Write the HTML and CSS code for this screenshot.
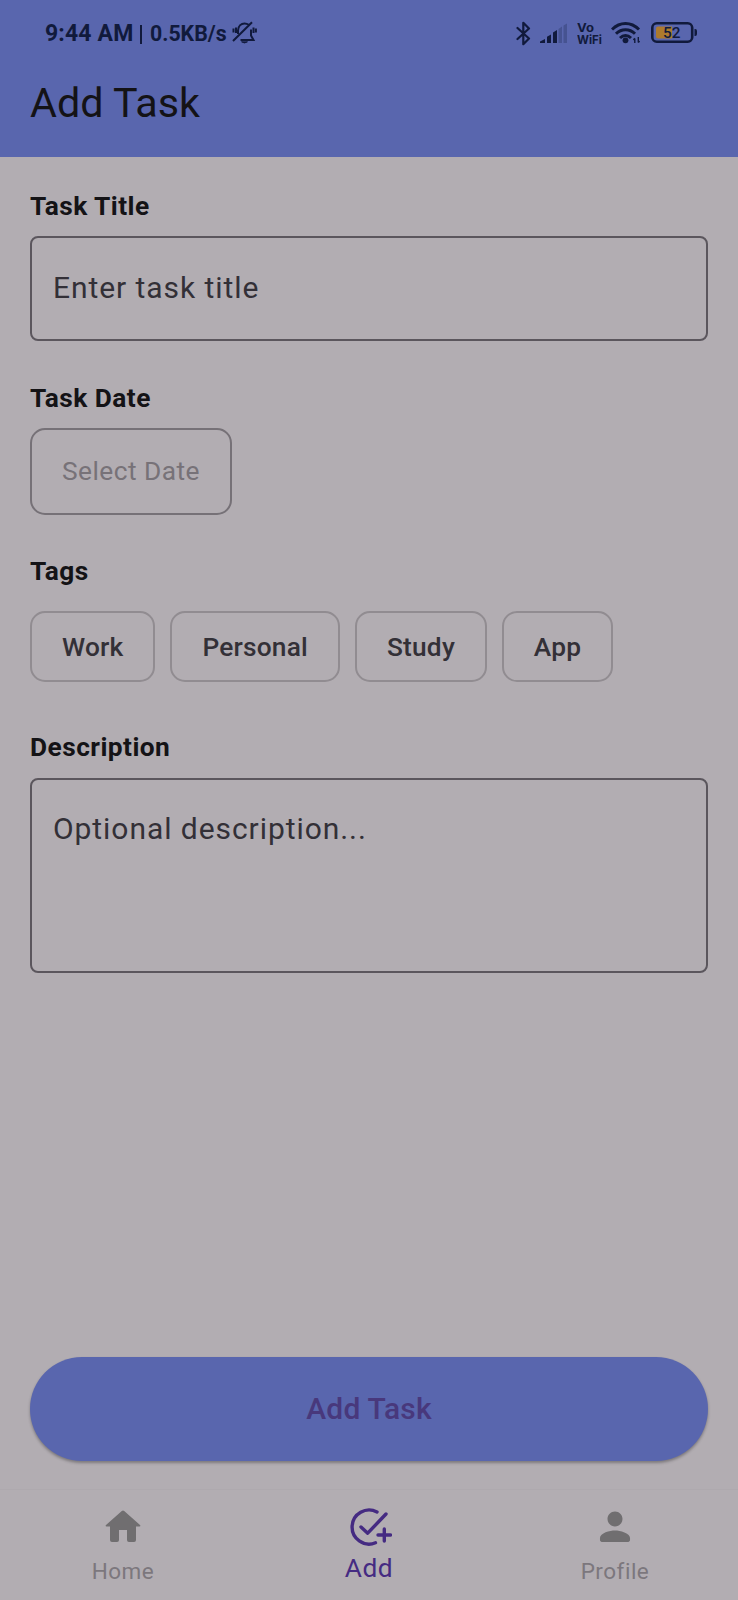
FILE: index.html
```html
<!DOCTYPE html>
<html lang="en">
<head>
<meta charset="utf-8">
<title>Add Task</title>
<link rel="stylesheet" href="styles.css">
</head>
<body>
<div class="screen">
  <header class="header">
    <div class="status">
      <span class="clock">9:44 AM</span>
      <span class="divider"></span>
      <span class="speed">0.5KB/s</span>
      <svg class="bell" width="25" height="24" viewBox="0 0 25 24" fill="none" stroke="currentColor" stroke-width="2">
        <path d="M6 13V9.500C6.300 5 9.300 2.500 12.500 2.500c1.600 0 3 .4 4.200 1.300M19 8.500V14.500l2.500 4.500H8.500M1 20 20 1.200M1.500 7.500v4M4 6.500v5.500M21.500 6.500v5.500M23.900 7.500v4"/>
        <path d="M9.500 20.800h6q-3 2.400-6 0z" fill="currentColor" stroke-width=".8"/>
      </svg>
      <div class="status-icons">
        <svg width="15" height="25" viewBox="0 0 15 25" fill="none" stroke="currentColor" stroke-width="2.200" stroke-linejoin="round" stroke-linecap="round"><path d="M1.500 7 13 17.500 7.300 23.200V1.800L13 7.500 1.500 18"/></svg>
        <svg class="signal" width="28" height="21" viewBox="0 0 28 21" fill="currentColor"><path d="M0 20v-1.500L5 16v4zM7 13.800 11 11.500V20H7zM13 9.500 17 7v13h-4z"/><path opacity=".25" d="M18.500 6 22 3.500V20h-3.500zM23.500 2.500 27 .5V20h-3.500z"/></svg>
        <svg class="vowifi" width="26" height="28" viewBox="0 -3 26 28" fill="currentColor"><text x="0" y="9.700" textLength="17" lengthAdjust="spacingAndGlyphs">Vo</text><text x="0" y="21.800" textLength="25" lengthAdjust="spacingAndGlyphs">WiFi</text></svg>
        <svg class="wifi" width="30" height="24" viewBox="0 0 30 24" fill="none" stroke="currentColor" stroke-width="3"><path d="M1 8.500C9 .5 20 .5 28 8.500M5 12.800c5.500-5.400 13.500-5.400 19 0M9 17c3.400-3.300 7.600-3.300 11 0"/><circle cx="14.500" cy="19.300" r="2.900" fill="currentColor" stroke="none"/><path stroke-width="1.400" d="M23.800 17.500v4.500M22.500 19l1.300-1.700M27.300 16v5.500M28.500 20l-1.200 1.700"/></svg>
        <svg class="battery" width="48" height="22" viewBox="0 0 48 22"><rect x="1.300" y="1.300" width="39.900" height="18.400" rx="4.500" fill="none" stroke="currentColor" stroke-width="2.600"/><path fill="#ad7a2d" d="M7 4.500h14v12H7q-2 0-2-2v-8q0-2 2-2z"/><path fill="currentColor" d="M43.500 7h.7q1.800 0 1.800 2v3q0 2-1.800 2h-.7z"/><text x="12" y="16.300" fill="currentColor" textLength="17.500" lengthAdjust="spacingAndGlyphs">52</text></svg>
      </div>
    </div>
    <h1 class="title">Add Task</h1>
  </header>

  <main class="form">
    <label class="label">Task Title</label>
    <div class="field">Enter task title</div>
    <label class="label label-date">Task Date</label>
    <button class="date">Select Date</button>
    <label class="label label-tags">Tags</label>
    <div class="tags">
      <span class="tag tag-work">Work</span>
      <span class="tag tag-personal">Personal</span>
      <span class="tag tag-study">Study</span>
      <span class="tag tag-app">App</span>
    </div>
    <label class="label label-description">Description</label>
    <div class="field field-area">Optional description...</div>
    <button class="submit">Add Task</button>
  </main>

  <nav class="nav">
    <a class="nav-item">
      <svg width="46" height="46" viewBox="0 0 46 46" fill="currentColor"><path d="M19 36V26h8v10q0 2 2 2h5q2 0 2-2V22.500h3.500q1.500-.2.500-1.500L24.200 7q-1.200-1-2.400 0L6 21q-1 1.300.5 1.500H10V36q0 2 2 2h5q2 0 2-2z"/></svg>
      <span>Home</span>
    </a>
    <a class="nav-item nav-active">
      <svg width="46" height="46" viewBox="0 0 46 46" fill="none" stroke="currentColor" stroke-width="3.400" stroke-linecap="round" stroke-linejoin="round"><path d="M31 8A17 17 0 1 0 29.500 38.800M15 23l6.700 6.200L40 10M38.300 25v12M32 31h12.500"/></svg>
      <span>Add</span>
    </a>
    <a class="nav-item">
      <svg width="46" height="46" viewBox="0 0 24.500 24.500" fill="currentColor"><path d="M12.250 12c2.210 0 4-1.790 4-4s-1.790-4-4-4-4 1.790-4 4 1.790 4 4 4zm0 2.100c-2.670 0-8 1.300-8 4v1.100c0 .55.45 1 1 1h14c.55 0 1-.45 1-1v-1.100c0-2.660-5.330-4-8-4z"/></svg>
      <span>Profile</span>
    </a>
  </nav>
</div>
</body>
</html>
```
FILE: styles.css
```css
* { box-sizing: border-box; }

body {
  margin: 0;
  background: #b2adb2;
  color: #141316;
  font-family: Roboto, "Liberation Sans", sans-serif;
}

.screen {
  display: flex;
  flex-direction: column;
  width: 738px;
  height: 1600px;
}

.header {
  height: 157px;
  background: #5966ae;
}

.status {
  display: flex;
  align-items: center;
  height: 66px;
  padding-left: 45px;
  color: #111a3c;
}

.clock {
  width: 95px;
  padding-top: 1px;
  font-size: 23px;
  font-weight: 700;
  line-height: 30px;
  letter-spacing: 0.150px;
  white-space: nowrap;
}

.divider {
  width: 2px;
  height: 19px;
  margin: 2px 8px 0 0;
  background: currentColor;
}

.speed {
  width: 82px;
  padding-top: 1px;
  font-size: 21.300px;
  font-weight: 700;
  line-height: 30px;
  white-space: nowrap;
}

.status-icons {
  display: flex;
  align-items: center;
  margin-left: 259px;
}

.signal { margin-left: 9px; }
.vowifi { margin-left: 9px; font: 700 11.500px Inter, sans-serif; }
.wifi { margin-left: 8px; }
.battery { margin-left: 10px; font: 500 15.500px Roboto, sans-serif; }

.title {
  margin: 12px 0 0 30px;
  font-size: 41.3px;
  font-weight: 400;
  line-height: 50px;
}

.form {
  display: flex;
  flex-direction: column;
  align-items: flex-start;
  height: 1332px;
  padding: 34px 30px 28px;
}

.label {
  font-size: 26.300px;
  font-weight: 700;
  line-height: 30px;
  letter-spacing: 0.450px;
}

.field {
  display: flex;
  align-items: center;
  width: 100%;
  height: 105px;
  margin-top: 15px;
  padding: 0 21px 2px;
  border: 2px solid #5b565d;
  border-radius: 8px;
  color: #333037;
  font-size: 30px;
  line-height: 36px;
  letter-spacing: 0.940px;
}

.label-date { margin-top: 42px; }

.date {
  width: 202px;
  height: 87px;
  margin-top: 15px;
  padding: 0 0 2px;
  border: 2px solid #767177;
  border-radius: 15px;
  background: none;
  color: #777278;
  font: 400 26.300px/32px Roboto, sans-serif;
  letter-spacing: 0.470px;
}

.label-tags { margin-top: 41px; }

.tags {
  display: flex;
  gap: 15px;
  margin-top: 25px;
}

.tag {
  height: 71px;
  border: 2px solid #918c91;
  border-radius: 15px;
  color: #333037;
  font-size: 26.300px;
  font-weight: 500;
  line-height: 68px;
  letter-spacing: 0.190px;
  text-align: center;
}

.tag-work { width: 125.400px; }
.tag-personal { width: 169.600px; }
.tag-study { width: 132px; }
.tag-app { width: 111px; }

.label-description { margin-top: 50px; }

.field-area {
  align-items: flex-start;
  height: 195px;
  margin-top: 16px;
  padding-top: 31px;
}

.submit {
  width: 100%;
  height: 104px;
  margin-top: auto;
  border: 0;
  border-radius: 52px;
  background: #5966ae;
  box-shadow: 0 2px 3px rgba(0, 0, 0, 0.3);
  color: #48387c;
  font: 500 30px/36px Roboto, sans-serif;
  letter-spacing: 0.190px;
}

.nav {
  display: flex;
  height: 111px;
  border-top: 1px solid #aea9ae;
}

.nav-item {
  display: flex;
  flex: 1;
  flex-direction: column;
  align-items: center;
  padding-top: 14px;
  color: #706e70;
  font-size: 22.500px;
  line-height: 28px;
  letter-spacing: 0.500px;
}

.nav-item span { margin-top: 7px; color: #7c777d; }

.nav-active { color: #452b82; font-size: 26.300px; }
.nav-active span { margin-top: 4px; color: #452b82; }
```
